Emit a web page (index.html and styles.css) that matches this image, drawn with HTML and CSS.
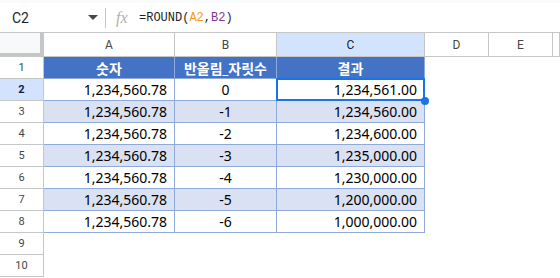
FILE: index.html
```html
<!DOCTYPE html>
<html lang="ko">
<head>
  <meta charset="UTF-8">
  <title>ROUND</title>
  <link rel="stylesheet" href="styles.css">
</head>
<body>

  <!-- formula bar -->
  <div class="topstrip"></div>
  <div class="formula-bar">
    <div class="namebox">C2</div>
    <div class="dropdown">
      <svg width="10" height="6" viewBox="0 0 10 6"><path d="M0 0h10L5 5z" fill="#444746"/></svg>
    </div>
    <div class="sep"></div>
    <div class="fx">fx</div>
    <div class="formula">=ROUND(<span class="ref1">A2</span>,<span class="ref2">B2</span>)</div>
  </div>

  <div class="sheet">
    <div class="corner"></div>
    <div class="colhead">A</div>
    <div class="colhead">B</div>
    <div class="colhead active">C</div>
    <div class="colhead">D</div>
    <div class="colhead">E</div>
    <div class="colhead"></div>

    <div class="rowhead">1</div>
    <div class="cell head">숫자</div>
    <div class="cell head">반올림_자릿수</div>
    <div class="cell head">결과</div>

    <div class="rowhead active">2</div>
    <div class="cell num">1,234,560.78</div>
    <div class="cell mid">0</div>
    <div class="cell num selected">1,234,561.00<span class="handle"></span></div>

    <div class="rowhead">3</div>
    <div class="cell num band">1,234,560.78</div>
    <div class="cell mid band">-1</div>
    <div class="cell num band">1,234,560.00</div>

    <div class="rowhead">4</div>
    <div class="cell num">1,234,560.78</div>
    <div class="cell mid">-2</div>
    <div class="cell num">1,234,600.00</div>

    <div class="rowhead">5</div>
    <div class="cell num band">1,234,560.78</div>
    <div class="cell mid band">-3</div>
    <div class="cell num band">1,235,000.00</div>

    <div class="rowhead">6</div>
    <div class="cell num">1,234,560.78</div>
    <div class="cell mid">-4</div>
    <div class="cell num">1,230,000.00</div>

    <div class="rowhead">7</div>
    <div class="cell num band">1,234,560.78</div>
    <div class="cell mid band">-5</div>
    <div class="cell num band">1,200,000.00</div>

    <div class="rowhead">8</div>
    <div class="cell num">1,234,560.78</div>
    <div class="cell mid">-6</div>
    <div class="cell num">1,000,000.00</div>

    <div class="rowhead">9</div>
    <div class="rowhead">10</div>
  </div>

</body>
</html>
```

FILE: styles.css
```css
body {
  margin: 0;
  background: #fff;
  font-family: Roboto, "Noto Sans", sans-serif;
  overflow: hidden;
}

.topstrip {
  height: 3px;
  background: #f9fbfd;
}

.formula-bar {
  height: 29px;
  border-bottom: 1px solid #c4c7c5;
  display: flex;
  align-items: center;
}

.namebox {
  width: 76px;
  padding-left: 12px;
  font-size: 14px;
  color: #1f1f1f;
}

.dropdown {
  width: 17px;
  display: flex;
  align-items: center;
}

.sep {
  width: 1px;
  height: 20px;
  background: #c4c7c5;
}

.fx {
  margin-left: 10px;
  width: 23px;
  font-family: "Liberation Serif", serif;
  font-style: italic;
  font-size: 16px;
  color: #b0b0b0;
}

.formula {
  font-family: "Liberation Mono", monospace;
  font-size: 12px;
  color: #1f1f1f;
}

.ref1 { color: #f7981d; }
.ref2 { color: #7e3794; }

.sheet {
  display: grid;
  grid-template-columns: 44px 131px 102px 148px 64px 64px 1fr;
  grid-template-rows: 24px repeat(10, 22px);
}

.sheet > div {
  box-sizing: border-box;
}

.corner {
  background: #f8f9fa;
  border-right: 4px solid #c4c7c5;
  border-bottom: 4px solid #c4c7c5;
}

.colhead {
  border-right: 1px solid #c4c7c5;
  border-bottom: 1px solid #c4c7c5;
  display: flex;
  align-items: center;
  justify-content: center;
  font-size: 12px;
  color: #444746;
}

.colhead.active {
  background: #d3e3fd;
  color: #0b1f44;
}

.rowhead {
  grid-column: 1;
  border-right: 1px solid #c4c7c5;
  border-bottom: 1px solid #c4c7c5;
  display: flex;
  align-items: center;
  justify-content: center;
  font-size: 11px;
  color: #444746;
}

.rowhead.active {
  background: #d3e3fd;
  color: #0b1f44;
  font-weight: bold;
}

.cell {
  position: relative;
  border-right: 1px solid #8eaadb;
  border-bottom: 1px solid #8eaadb;
  display: flex;
  align-items: center;
  font-family: "Noto Sans", "Noto Sans CJK KR", sans-serif;
  font-size: 14px;
  color: #000;
  white-space: nowrap;
}

.cell.head {
  background: #4472c4;
  color: #fff;
  font-weight: bold;
  justify-content: center;
  font-size: 14px;
}

.cell.num {
  justify-content: flex-end;
  padding-right: 7px;
}

.cell.mid {
  justify-content: center;
}

.cell.band {
  background: #d9e1f2;
}

.cell.selected::after {
  content: "";
  position: absolute;
  top: -1px;
  left: -1px;
  right: -1px;
  bottom: -1px;
  border: 2px solid #1a73e8;
}

.handle {
  position: absolute;
  right: -5px;
  bottom: -5px;
  width: 8px;
  height: 8px;
  border-radius: 50%;
  background: #1a73e8;
  z-index: 2;
}
```
